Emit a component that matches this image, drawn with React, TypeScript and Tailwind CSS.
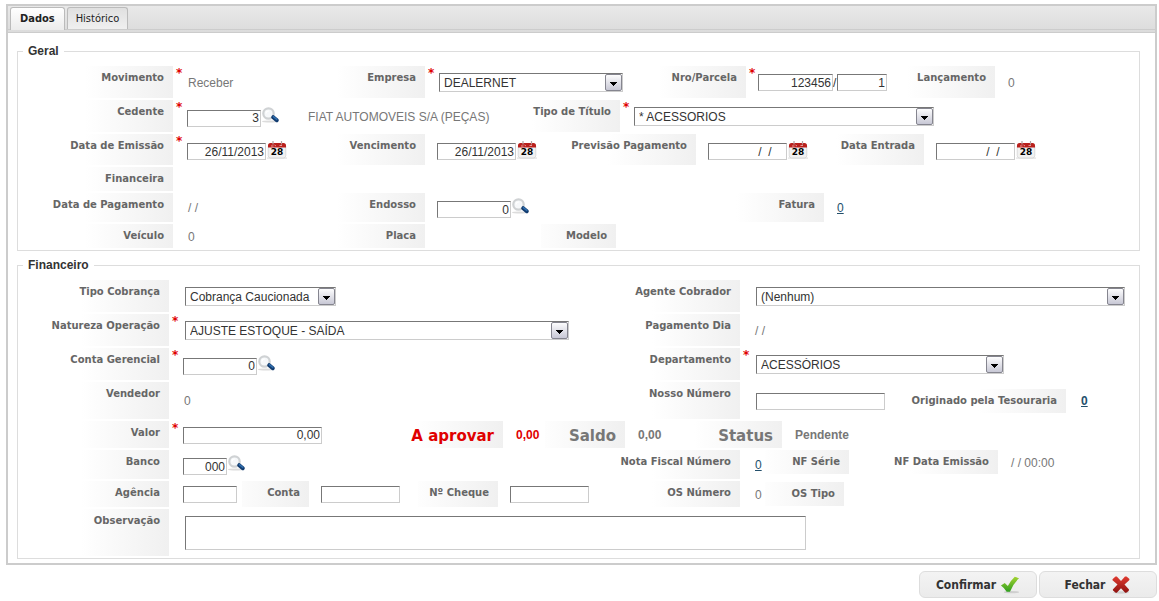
import React from "react";

type FieldProps = {
  width?: string;
  lead?: string;
  required?: boolean;
  children?: React.ReactNode;
};

type LabelProps = {
  width: string;
  htmlFor?: string;
  size?: string;
  children: React.ReactNode;
};

const SHADE =
  "bg-[linear-gradient(to_right,#ffffff,#f0f0f0)] bg-right bg-no-repeat bg-[length:88px_100%]";
const BEVEL = "border border-t-[#777] border-l-[#777] border-r-[#ccc] border-b-[#ccc] bg-white";

function Row({ height, children }: { height: string; children: React.ReactNode }) {
  return <div className={`flex items-stretch ${height}`}>{children}</div>;
}

function Label({ width, htmlFor, size, children }: LabelProps) {
  const cls = `block shrink-0 whitespace-nowrap pr-[9px] text-right font-['DejaVu_Sans',sans-serif] font-bold ${SHADE} ${width} ${
    size ?? "pt-[5px] text-[10px] leading-[13px] text-[#666]"
  }`;
  return htmlFor ? (
    <label htmlFor={htmlFor} className={cls}>
      {children}
    </label>
  ) : (
    <span className={cls}>{children}</span>
  );
}

function Field({ width = "flex-1", lead = "w-3", required, children }: FieldProps) {
  return (
    <div className={`flex min-w-0 shrink-0 ${width}`}>
      <span
        className={`shrink-0 font-['DejaVu_Sans',sans-serif] text-[12px] leading-[14px] font-bold text-[#e00000] ${lead} ${
          required ? "pl-[3px]" : ""
        }`}
      >
        {required ? "*" : ""}
      </span>
      <div className="flex min-w-0 flex-1 items-center pt-px whitespace-nowrap">{children}</div>
    </div>
  );
}

function TextBox({ id, width, value = "", label }: { id: string; width: string; value?: string; label?: string }) {
  return (
    <input
      id={id}
      aria-label={label}
      type="text"
      defaultValue={value}
      className={`h-[17px] shrink-0 rounded-none px-px text-right text-[12px] leading-[14px] text-[#333] outline-none ${BEVEL} ${width}`}
    />
  );
}

function SelectBox({ id, width, value }: { id: string; width: string; value: string }) {
  return (
    <span className={`relative block h-[19px] ${width}`}>
      <select
        id={id}
        className={`block h-full w-full appearance-none rounded-none pr-5 pl-1 text-[12px] text-[#333] outline-none ${BEVEL}`}
      >
        <option>{value}</option>
      </select>
      <svg className="pointer-events-none absolute top-px right-px" width="17" height="17" viewBox="0 0 17 17">
        <defs>
          <linearGradient id={`${id}-arrow`} x1="0" y1="0" x2="0" y2="1">
            <stop offset="0" stopColor="#fff" />
            <stop offset="1" stopColor="#c6c6d4" />
          </linearGradient>
        </defs>
        <rect x=".5" y=".5" width="16" height="16" rx="1.5" fill={`url(#${id}-arrow)`} stroke="#85858f" />
        <path d="M5 8h7v1h-1v1h-1v1H9v1H8v-1H7v-1H6V9H5z" fill="#000" />
      </svg>
    </span>
  );
}

function SearchButton({ label }: { label: string }) {
  return (
    <button type="button" aria-label={label} className="ml-px shrink-0 self-start">
      <svg width="18" height="17" viewBox="0 0 18 17">
        <ellipse cx="8" cy="14.500" rx="8" ry="1" fill="#dcdcdc" />
        <circle cx="6.5" cy="6.5" r="5.2" fill="#f6f8fa" stroke="#cfd2d4" strokeWidth="2.200" />
        <path d="M4 6.5A2.8 2.8 0 0 1 7 4" fill="none" stroke="#fff" strokeWidth="1.2" />
        <path d="M11.200 10.200l3.600 3" stroke="#123c70" strokeWidth="4" strokeLinecap="round" />
        <path d="M11.400 9.600l3.400 2.800" stroke="#2f6fb0" strokeWidth="1.400" strokeLinecap="round" />
      </svg>
    </button>
  );
}

function CalendarButton({ label }: { label: string }) {
  return (
    <button type="button" aria-label={label} className="ml-px shrink-0 self-start">
      <svg width="20" height="20" viewBox="0 0 20 20">
        <rect x="0" y="17.5" width="20" height="1.2" fill="#e2e2e2" />
        <rect x="1.200" y="4" width="17.600" height="14" rx="2.500" fill="#f1f1f1" stroke="#d0d0d0" strokeWidth=".7" />
        <path d="M1 7.500V5.500A2.500 2.500 0 0 1 3.500 3h13A2.500 2.500 0 0 1 19 5.500v2z" fill="#b9201c" />
        <path d="M4 6h2.500M7.500 5l1.500 1M12.500 5.500H15" stroke="#e89a96" strokeWidth="1" />
        <path d="M6 1v3.500M14.500 1v3.500" stroke="#b5a0a0" strokeWidth="1.200" />
        <text
          x="10"
          y="15"
          textAnchor="middle"
          fontFamily="DejaVu Sans, sans-serif"
          fontSize="9"
          fontWeight="bold"
          fill="#000"
        >
          28
        </text>
      </svg>
    </button>
  );
}

function WithIcon({ children, icon }: { children: React.ReactNode; icon: React.ReactNode }) {
  return (
    <span className="flex h-5 items-end">
      {children}
      {icon}
    </span>
  );
}

function DateBox({ id, value, label }: { id: string; value: string; label: string }) {
  return (
    <WithIcon icon={<CalendarButton label={label} />}>
      <TextBox id={id} width="w-[79px]" value={value} />
    </WithIcon>
  );
}

function Value({ children }: { children: React.ReactNode }) {
  return <span className="pl-px text-[#777]">{children}</span>;
}

function ValueLink({ bold, children }: { bold?: boolean; children: React.ReactNode }) {
  return (
    <a href="#" className={`ml-px text-[#234f6b] underline ${bold ? "font-bold" : ""}`}>
      {children}
    </a>
  );
}

function Group({ title, children }: { title: string; children: React.ReactNode }) {
  return (
    <fieldset className="min-w-0 border border-[#ddd] px-[5px] pb-[2px]">
      <legend className="px-[5px] text-[12px] leading-[14px] font-bold text-[#333]">{title}</legend>
      <div className="flex flex-col gap-[2px] pt-2">{children}</div>
    </fieldset>
  );
}

const BIG = "pt-[6px] text-[15px] leading-[18px]";
const ACTION =
  "flex h-[27px] w-[118px] items-center justify-center gap-1 rounded-[6px] border border-[#ddd] bg-linear-to-b from-[#f3f3f3] to-[#ebebeb] font-['DejaVu_Sans_Condensed','DejaVu_Sans',sans-serif] text-[12px] font-bold text-[#333]";

export default function App() {
  return (
    <main className="pt-1 pr-[2px] pl-[6px] font-['Liberation_Sans',Arial,sans-serif] text-[12px] leading-[14px]">
      <section className="border-2 border-[#ccc] bg-white">
        <div className="border-b border-[#ccc] bg-linear-to-b from-[#e9e9e9] to-[#dcdcdc] pb-[2px]">
          <div
            role="tablist"
            className="flex h-6 items-end gap-[2px] border-b border-[#ccc] pl-[2px] font-['DejaVu_Sans_Condensed','DejaVu_Sans',sans-serif] text-[11px]"
          >
            <button
              role="tab"
              aria-selected="true"
              className="-mb-px h-[23px] rounded-t-[3px] border border-b-0 border-[#bbb] bg-linear-to-b from-white to-[#ececec] px-[9px] font-bold text-[#222]"
            >
              Dados
            </button>
            <button
              role="tab"
              aria-selected="false"
              className="h-[22px] rounded-t-[3px] border border-b-0 border-[#bbb] bg-linear-to-b from-[#e0e0e0] to-[#f0f0f0] px-2 text-[#222]"
            >
              Histórico
            </button>
          </div>
        </div>

        <div className="flex flex-col gap-[7px] pt-[11px] pr-[15px] pb-1 pl-[9px]">
          <Group title="Geral">
            <Row height="min-h-8">
              <Label width="w-[150px]">Movimento</Label>
              <Field width="w-[164px]" lead="w-[14px]" required>
                <Value>Receber</Value>
              </Field>
              <Label width="w-[88px]" htmlFor="empresa">Empresa</Label>
              <Field width="w-[233px]" lead="w-[14px]" required>
                <SelectBox id="empresa" width="w-[184px]" value="DEALERNET" />
              </Field>
              <Label width="w-[88px]" htmlFor="numero">Nro/Parcela</Label>
              <Field width="w-[161px]" required>
                <TextBox id="numero" width="w-[75px]" value="123456" />
                <span className="w-1 text-[#333]">/</span>
                <TextBox id="parcela" label="Parcela" width="w-[50px]" value="1" />
              </Field>
              <Label width="w-[88px]">Lançamento</Label>
              <Field>
                <Value>0</Value>
              </Field>
            </Row>
            <Row height="min-h-8">
              <Label width="w-[150px]" htmlFor="cedente">Cedente</Label>
              <Field width="w-[135px]" lead="w-[14px]" required>
                <WithIcon icon={<SearchButton label="Pesquisar cedente" />}>
                  <TextBox id="cedente" width="w-[74px]" value="3" />
                </WithIcon>
              </Field>
              <Field width="w-[224px]" lead="w-0">
                <span className="text-[#777]">FIAT AUTOMOVEIS S/A (PEÇAS)</span>
              </Field>
              <Label width="w-[88px]" htmlFor="tipo-titulo">Tipo de Título</Label>
              <Field lead="w-[14px]" required>
                <SelectBox id="tipo-titulo" width="w-[300px]" value="* ACESSORIOS" />
              </Field>
            </Row>
            <Row height="min-h-[31px]">
              <Label width="w-[150px]" htmlFor="emissao">Data de Emissão</Label>
              <Field width="w-[164px]" lead="w-[14px]" required>
                <DateBox id="emissao" value="26/11/2013" label="Escolher data de emissão" />
              </Field>
              <Label width="w-[88px]" htmlFor="vencimento">Vencimento</Label>
              <Field width="w-[135px]">
                <DateBox id="vencimento" value="26/11/2013" label="Escolher vencimento" />
              </Field>
              <Label width="w-[136px]" htmlFor="previsao">Previsão Pagamento</Label>
              <Field width="w-[140px]">
                <DateBox
                  id="previsao"
                  value={"/\u00a0\u00a0/\u00a0\u00a0\u00a0\u00a0"}
                  label="Escolher previsão de pagamento"
                />
              </Field>
              <Label width="w-[88px]" htmlFor="entrada">Data Entrada</Label>
              <Field>
                <DateBox
                  id="entrada"
                  value={"/\u00a0\u00a0/\u00a0\u00a0\u00a0\u00a0"}
                  label="Escolher data de entrada"
                />
              </Field>
            </Row>
            <Row height="min-h-6">
              <Label width="w-[150px]">Financeira</Label>
            </Row>
            <Row height="min-h-[29px]">
              <Label width="w-[150px]">Data de Pagamento</Label>
              <Field width="w-[164px]" lead="w-[14px]">
                <Value>/ /</Value>
              </Field>
              <Label width="w-[88px]" htmlFor="endosso">Endosso</Label>
              <Field width="w-[311px]">
                <WithIcon icon={<SearchButton label="Pesquisar endosso" />}>
                  <TextBox id="endosso" width="w-[74px]" value="0" />
                </WithIcon>
              </Field>
              <Label width="w-[88px]">Fatura</Label>
              <Field>
                <ValueLink>0</ValueLink>
              </Field>
            </Row>
            <Row height="min-h-6">
              <Label width="w-[150px]">Veículo</Label>
              <Field width="w-[164px]" lead="w-[14px]">
                <Value>0</Value>
              </Field>
              <Label width="w-[88px]">Placa</Label>
              <Field width="w-[116px]" />
              <Label width="w-[75px]">Modelo</Label>
            </Row>
          </Group>

          <Group title="Financeiro">
            <Row height="min-h-8">
              <Label width="w-[146px]" htmlFor="cobranca">Tipo Cobrança</Label>
              <Field width="w-[447px]" lead="w-4">
                <SelectBox id="cobranca" width="w-[151px]" value="Cobrança Caucionada" />
              </Field>
              <Label width="w-[124px]" htmlFor="agente">Agente Cobrador</Label>
              <Field width="flex-1 pr-[9px]" lead="w-4">
                <SelectBox id="agente" width="w-full" value="(Nenhum)" />
              </Field>
            </Row>
            <Row height="min-h-8">
              <Label width="w-[146px]" htmlFor="natureza">Natureza Operação</Label>
              <Field width="w-[447px]" lead="w-4" required>
                <SelectBox id="natureza" width="w-[384px]" value="AJUSTE ESTOQUE - SAÍDA" />
              </Field>
              <Label width="w-[124px]">Pagamento Dia</Label>
              <Field lead="w-[14px]">
                <Value>/ /</Value>
              </Field>
            </Row>
            <Row height="min-h-8">
              <Label width="w-[146px]" htmlFor="conta-gerencial">Conta Gerencial</Label>
              <Field width="w-[447px]" lead="w-[14px]" required>
                <WithIcon icon={<SearchButton label="Pesquisar conta gerencial" />}>
                  <TextBox id="conta-gerencial" width="w-[74px]" value="0" />
                </WithIcon>
              </Field>
              <Label width="w-[124px]" htmlFor="departamento">Departamento</Label>
              <Field lead="w-4" required>
                <SelectBox id="departamento" width="w-[248px]" value="ACESSÓRIOS" />
              </Field>
            </Row>
            <Row height="min-h-[37px]">
              <Label width="w-[146px]">Vendedor</Label>
              <Field width="w-[447px]" lead="w-[14px]">
                <Value>0</Value>
              </Field>
              <Label width="w-[124px]" htmlFor="nosso-numero">Nosso Número</Label>
              <Field width="w-[164px]" lead="w-4">
                <TextBox id="nosso-numero" width="w-[129px]" />
              </Field>
              <div className="flex h-6 self-center">
                <Label width="w-[162px]">Originado pela Tesouraria</Label>
                <Field lead="w-[14px]">
                  <ValueLink bold>0</ValueLink>
                </Field>
              </div>
            </Row>
            <Row height="min-h-[27px]">
              <Label width="w-[146px]" htmlFor="valor">Valor</Label>
              <Field width="w-[226px]" lead="w-[14px]" required>
                <TextBox id="valor" width="w-[139px]" value="0,00" />
              </Field>
              <Label width="w-[108px]" size={`${BIG} text-[#e00000]`}>A aprovar</Label>
              <Field width="w-[42px]">
                <span className="pl-px font-bold text-[#e00000]">0,00</span>
              </Field>
              <Label width="w-[80px]" size={`${BIG} text-[#777]`}>Saldo</Label>
              <Field width="w-[65px]">
                <span className="pl-px font-bold text-[#777]">0,00</span>
              </Field>
              <Label width="w-[92px]" size={`${BIG} text-[#777]`}>Status</Label>
              <Field>
                <span className="pl-px font-bold text-[#777]">Pendente</span>
              </Field>
            </Row>
            <Row height="min-h-[29px]">
              <Label width="w-[146px]" htmlFor="banco">Banco</Label>
              <Field width="w-[447px]" lead="w-[14px]">
                <WithIcon icon={<SearchButton label="Pesquisar banco" />}>
                  <TextBox id="banco" width="w-11" value="000" />
                </WithIcon>
              </Field>
              <Label width="w-[124px]">Nota Fiscal Número</Label>
              <Field width="w-[25px]" lead="w-[14px]">
                <ValueLink>0</ValueLink>
              </Field>
              <div className="flex h-6">
                <Label width="w-[84px]">NF Série</Label>
                <Field width="w-[31px]" />
                <Label width="w-[118px]">NF Data Emissão</Label>
                <Field>
                  <Value>/ / 00:00</Value>
                </Field>
              </div>
            </Row>
            <Row height="min-h-[26px]">
              <Label width="w-[146px]" htmlFor="agencia">Agência</Label>
              <Field width="w-[73px]" lead="w-[14px]">
                <TextBox id="agencia" width="w-[54px]" />
              </Field>
              <Label width="w-[67px]" htmlFor="conta">Conta</Label>
              <Field width="w-[109px]">
                <TextBox id="conta" width="w-[79px]" />
              </Field>
              <Label width="w-[80px]" htmlFor="cheque">Nº Cheque</Label>
              <Field width="w-[118px]">
                <TextBox id="cheque" width="w-[79px]" />
              </Field>
              <Label width="w-[124px]">OS Número</Label>
              <Field width="w-[25px]" lead="w-[14px]">
                <Value>0</Value>
              </Field>
              <div className="flex h-6 self-center">
                <Label width="w-[79px]">OS Tipo</Label>
              </div>
            </Row>
            <Row height="min-h-[47px]">
              <Label width="w-[146px]" htmlFor="observacao">Observação</Label>
              <Field lead="w-4">
                <textarea
                  id="observacao"
                  className={`block h-[34px] w-[621px] resize-none rounded-none px-1 outline-none ${BEVEL}`}
                />
              </Field>
            </Row>
          </Group>
        </div>
      </section>

      <div className="flex justify-end gap-[2px] pt-[6px]">
        <button type="button" className={ACTION}>
          Confirmar
          <svg width="20" height="20" viewBox="0 0 21 20">
            <defs>
              <linearGradient id="check-fill" x1="0" y1="0" x2="0" y2="1">
                <stop offset="0" stopColor="#a5d432" />
                <stop offset="1" stopColor="#2f9e1e" />
              </linearGradient>
            </defs>
            <ellipse cx="12" cy="17.5" rx="8" ry="1.2" fill="#cfcfcf" />
            <path
              d="M1 10.500L5 7.800l3.200 3.200Q11 5.500 15.500 1.300l4.500 1.500Q13.500 9 10.500 17H7Q4.500 13 1 10.500z"
              fill="url(#check-fill)"
            />
          </svg>
        </button>
        <button type="button" className={ACTION}>
          Fechar
          <svg className="ml-[2px]" width="20" height="20" viewBox="0 0 20 20">
            <defs>
              <linearGradient id="cross-fill" x1="0" y1="0" x2="0" y2="1">
                <stop offset="0" stopColor="#e03a30" />
                <stop offset="1" stopColor="#8e1210" />
              </linearGradient>
            </defs>
            <ellipse cx="10" cy="17.5" rx="8" ry="1.2" fill="#cfcfcf" />
            <path
              d="M1.500 4.200L4.500 1.500h1.300L10 6l4-4.500h1.500L18.500 4l-.3 1.200L13.500 9.500l4.500 5-.3 1.500-2.500 1.800h-1L10 13.200l-4.200 4.600H4.700L2 15.500l-.2-1L6.500 9.500 1.500 5.200z"
              fill="url(#cross-fill)"
            />
          </svg>
        </button>
      </div>
    </main>
  );
}
